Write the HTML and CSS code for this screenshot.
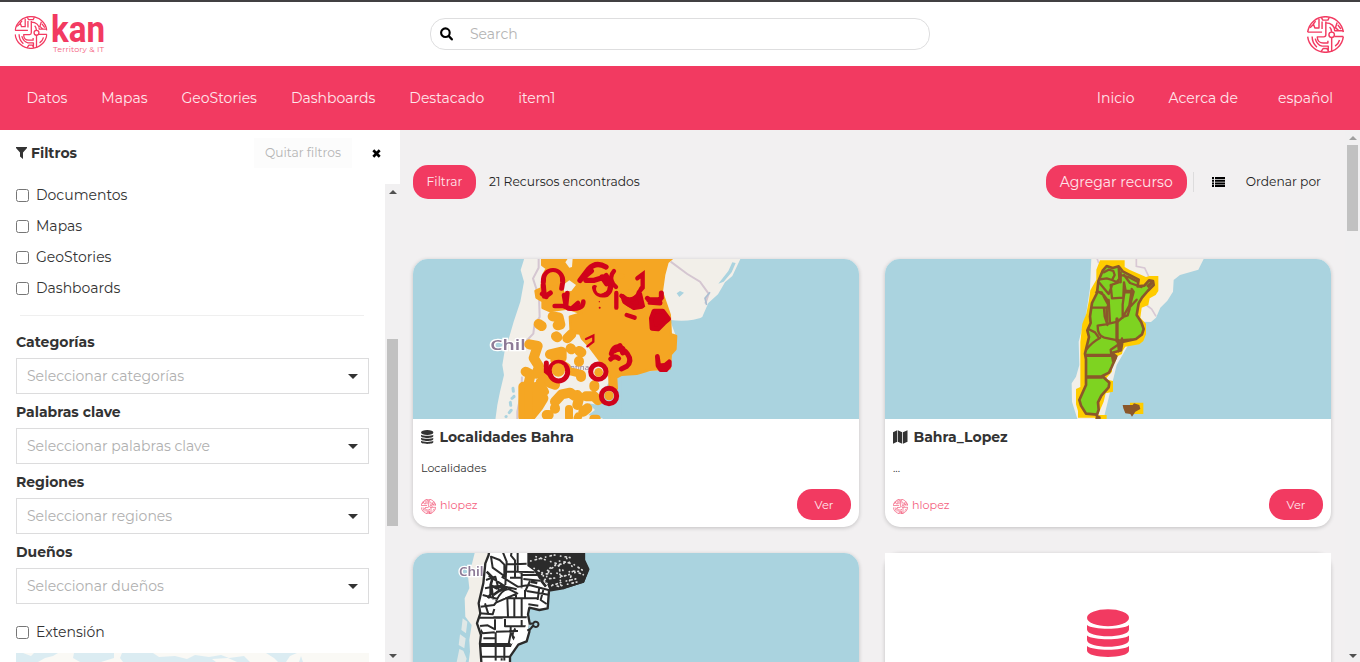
FILE: index.html
```html
<!DOCTYPE html>
<html lang="es">
<head>
<meta charset="utf-8">
<title>Kan Territory &amp; IT</title>
<link rel="stylesheet" href="styles.css">
</head>
<body>
<svg class="defs" width="0" height="0">
  <symbol id="globe" viewBox="0 0 108 108">
    <g fill="none" stroke="#f23a61" stroke-width="4.200" stroke-linejoin="round">
      <path d="M2 47C6 20 28 2 54 2s48 18 52 45"/>
      <path d="M2 60c3 26 25 46 52 46s49-20 52-46"/>
      <path d="M2 47h42M9 34l10-10 4 11h12V9M18 24l7-9M44 16v22"/>
      <path d="M42 4l4 8h15l4-8M55 16v39a6 6 0 0 1-6 6H30c0 12 8 18 17 18h14v-7"/>
      <path d="M55 20c16 0 26 10 26 23h25M66 32c4 3 5 8 6 15M88 19l-5 15 10 9M90 26l9 12"/>
      <circle cx="72" cy="55" r="8"/>
      <path d="M72 63v42M80 60h26M95 70c-2 8-6 13-13 18M15 60c0 14 6 24 14 31M24 66c3 11 10 20 20 22h18v17M41 104l6-9h11l6 9"/>
    </g>
  </symbol>
  <symbol id="database" viewBox="0 0 42 48">
    <ellipse cx="21" cy="8.700" rx="21" ry="8.500"/>
    <path d="M0 16c6 5 36 5 42 0v4.500c0 9-42 9-42 0zM0 26.500c6 5 36 5 42 0V31c0 9-42 9-42 0zM0 37c6 5 36 5 42 0v4.500c0 8.500-42 8.500-42 0z"/>
  </symbol>
  <clipPath id="provinces"><path d="M158 47l12-17 18 6 18-5 12 15 48 25-3 22 20-8 22-10 10 15-18 18-17 22-12 17-9 35 17 25 4 20-22 20-42 14-4 25-28 8 18 12-18 30-8 17-20 10 21 20-2 14-22 25-10 20 2 22-5 15-33-3-15-24-5-17 20-45 0-77-3-17 12-50-5-20 10-22 4-40-3-30 18-30 0-32z"/></clipPath>
  <clipPath id="departments"><path d="M240 20H525l-3 25 15 28-15 40-60 18-45 5-4 55-25 7-34-7-4 28-2 20-8 28-25 10-17 40v30H215l-5-70 3-25-12-35 10-30-5-30 14-60 6-60 10-25 4-30z"/></clipPath>
</svg>

<header class="brandbar">
  <svg class="logo" width="96" height="44" viewBox="0 0 96 44">
    <use href="#globe" x="0.500" y="4" width="33" height="33"/>
    <text class="logo-name" x="37" y="29.700" textLength="54" lengthAdjust="spacingAndGlyphs">kan</text>
    <text class="logo-tag" x="39" y="40" textLength="51" lengthAdjust="spacing">Territory &amp; IT</text>
  </svg>
  <div class="search">
    <svg width="14" height="14" viewBox="0 0 14 14"><circle cx="5.400" cy="5.700" r="4.300" fill="none" stroke="#000" stroke-width="2.100"/><path d="M8.700 9l3.100 3.300" stroke="#000" stroke-width="2.400" stroke-linecap="round"/></svg>
    <span>Search</span>
  </div>
  <svg class="avatar" width="37" height="37"><use href="#globe" width="37" height="37"/></svg>
</header>

<nav class="menu">
  <div class="menu-left"><a>Datos</a><a>Mapas</a><a>GeoStories</a><a>Dashboards</a><a>Destacado</a><a>item1</a></div>
  <div class="menu-right"><a>Inicio</a><a>Acerca de</a><a class="lang">español</a></div>
</nav>

<div class="body">
  <aside class="side">
    <div class="side-head">
      <svg width="11" height="12" viewBox="0 0 11 12"><path d="M0 0h11v1L7 5.500V12L4 9.500v-4L0 1z" fill="#333"/></svg>
      <b>Filtros</b>
      <span class="clear">Quitar filtros</span>
      <svg class="close" width="9" height="9" viewBox="0 0 9 9"><path d="M1.300 1.300l6.400 6.400M7.700 1.300L1.300 7.700" stroke="#000" stroke-width="2.700"/></svg>
    </div>
    <div class="side-body">
      <div class="filters">
        <label class="check"><i></i><span>Documentos</span></label>
        <label class="check"><i></i><span>Mapas</span></label>
        <label class="check"><i></i><span>GeoStories</span></label>
        <label class="check"><i></i><span>Dashboards</span></label>
        <hr>
        <b class="field-name">Categorías</b>
        <div class="select">Seleccionar categorías</div>
        <b class="field-name">Palabras clave</b>
        <div class="select">Seleccionar palabras clave</div>
        <b class="field-name">Regiones</b>
        <div class="select">Seleccionar regiones</div>
        <b class="field-name">Dueños</b>
        <div class="select">Seleccionar dueños</div>
        <label class="check extent"><i></i><span>Extensión</span></label>
        <svg class="minimap" width="353" height="9" viewBox="0 0 353 9"><path fill="#dbecf2" d="M0 0h353v9H0z"/><path fill="#faf9f5" d="M7 0h11l-3 3zM22 9l7-4 8-2 5-3h16l-1 5 7 4zM85 9l13-4V0h8l-2 5 3 4zM137 0h113l8 5 4 4h-28l-6-6-15 2-8-3-12 2-14-2-8 4-12-3-16 1zM196 6l16-1 9 4h-21zM270 9l4-6 7-3h15v9h-9l-2-6-2 6zM296 0h57v9h-57z"/></svg>
      </div>
      <div class="bar"><i class="up dark"></i><div class="thumb side-thumb"></div><i class="down"></i></div>
    </div>
  </aside>

  <main class="main">
    <div class="content">
      <div class="tools">
        <span class="btn filter">Filtrar</span>
        <span class="count">21 Recursos encontrados</span>
        <span class="btn add">Agregar recurso</span>
        <span class="divider"></span>
        <svg class="list" width="13" height="10" viewBox="0 0 13 10"><path d="M0 0h2v2H0zM3 0h10v2H3zM0 2.700h2v2H0zM3 2.700h10v2H3zM0 5.400h2v2H0zM3 5.400h10v2H3zM0 8h2v2H0zM3 8h10v2H3z"/></svg>
        <span class="order">Ordenar por</span>
      </div>
      <div class="cards">
        <article class="card">
          <svg class="pic" viewBox="0 0 446 160">
            <path fill="#aad3df" d="M0 0h446v160H0z"/>
            <g transform="translate(67 -4) scale(.33333)">
              <path fill="#f2efe9" d="M133 10L122 45 132 80 121 140 101 200 88 245 76 275 67 330 72 360 60 410 52 450 46 495H370L345 450 400 360 545 345 590 250 570 195Q610 200 640 194T668 183L685 144 714 118 735 82 757 63 782 10z"/>
              <path fill="#aad3df" d="M757 22l-12 26-30 38 16-6 24-28 12-28zM590 115l10-7 12 5-14 13zM415 365l0 25 5 50-30 15-65-10 20 20-20 15 40 10 60-10V365z"/>
              <path fill="none" stroke="#aad3df" stroke-width="9" stroke-linecap="round" stroke-dasharray="9 15" d="M99 400l3 25-12 10 4 30-16 20"/>
              <path fill="none" stroke="#cdbcca" stroke-width="6" opacity=".8" d="M176 10v28l-17 33 18 55 2 60-16 25-3 25-24 25M126 365l-2 45-12 60 0 25M572 20l50 37 38 23 26 36-10 30"/>
              <path fill="none" stroke="#aabfd2" stroke-width="5" d="M690 112l-15 18 5 20"/>
              <g class="place"><text x="31" y="286" textLength="106" lengthAdjust="spacingAndGlyphs">Chil</text></g>
              <text x="270" y="346" class="place-small">ntina</text>
              <path fill="#f5a623" stroke="#f5a623" stroke-width="8" stroke-linejoin="round" d="M187 10H576L562 22 552 60 545 110 569 180 572 238 588 243 586 282 572 298 569 340 510 344 470 356 425 359 408 368 410 401 390 401 388 355 355 310 329 275 306 250 300 235 275 232 272 222 270 185 305 175 262 160 230 165 210 168 188 158 188 138 170 128 167 108 184 100 189 62 201 40 187 30z"/>
              <path fill="#f2efe9" d="M256 22l8-12 14 0-2 26-8 2zM252 88l16-12 20 14-14 18-22 2z"/>
              <g fill="none" stroke="#f5a623" stroke-linecap="round" stroke-linejoin="round">
                <path stroke-width="30" d="M176 207l9 6M218 184l18 3 5 22-8 2M228 244l4 3M262 250l12-12M148 268l25 5-12 36 16 25-7 22M137 350l15 8-8 35M180 350l30 34 15 5M130 395v90M165 400l-10 80 20-25 15-25-20-35M225 440l20-22 25-5 14 10M292 420l4 5M225 459v2M292 450l4-16M200 480h6M322 460l-12 10M318 424h24l12 12M343 391v4M303 360v6M272 280l2 3M298 288l6 4M297 318v2M210 298l35-8v18"/>
                <path stroke-width="24" d="M145 405v80M180 380l15 30M267 462v25M295 484l-2 4M350 491h-10M223 315h10M250 330l10 6M275 350l24 6"/>
              </g>
              <g fill="none" stroke="#d0021b" stroke-width="15" stroke-linecap="round">
                <path d="M190 82c-3-48 62-46 58 0l-3 18M190 90l3 34M187 117l12 8M205 118l6-4"/>
                <path d="M224 153h26l22 8M262 114l-4 40M264 160q46 6 46-20M252 120l6 34M294 144l-18 16" stroke-width="14"/>
                <path d="M300 76l26-34q22-24 52-6M312 66l22-18M318 76h24l20-6 16-6M344 98q6 28 36 20 16-12 10-36l-12-20M366 66l14 20" stroke-width="16"/>
                <path d="M402 48q-16 18-2 40l8 8M409 114v44M424 122l28 20 20-20 12-22M472 70l16-12v40l-12 14M432 137q22 26 56 14l-8-34M440 180l24 8" stroke-width="13"/>
                <path d="M502 130q20 20 42-2v-14M510 142l30 2M506 134h34" stroke-width="15"/>
                <path d="M318 252l22-10v18l-18 14" stroke-width="7"/>
                <ellipse cx="236" cy="350" rx="27" ry="28"/><path d="M199 324v25l12 10"/><circle cx="355" cy="350" r="23"/><circle cx="387" cy="423" r="23"/>
                <path d="M394 296q8-30 34-16M402 288q24-14 40 8 16 22-2 38l-16 8M392 312q12-12 24-2"/><path d="M420 272l8 22"/>
              </g>
              <path fill="#d0021b" stroke="#d0021b" stroke-width="14" stroke-linejoin="round" d="M428 124q20 22 48-4l10 34-24 4-28-18zM522 168h26l18 24-14 12-18 18-18-2-2-30zM532 304l4 26q18 6 32-10v12l-10 12h-16l-8-12z"/>
              <g fill="#f5a623"><circle cx="219" cy="72" r="21"/><circle cx="425" cy="62" r="8"/><circle cx="450" cy="114" r="10"/><circle cx="387" cy="422" r="14"/><circle cx="356" cy="352" r="13"/><circle cx="235" cy="345" r="20"/><circle cx="362" cy="102" r="14"/></g>
              <g fill="#d0021b"><circle cx="358" cy="140" r="2"/><circle cx="359" cy="158" r="3"/></g>
            </g>
          </svg>
          <div class="info">
            <h2><svg width="12.500" height="14" viewBox="0 0 42 48" preserveAspectRatio="none"><use href="#database" width="42" height="48"/></svg><span>Localidades Bahra</span></h2>
            <p>Localidades</p>
            <div class="foot"><svg width="15" height="15"><use href="#globe" width="15" height="15"/></svg><span class="owner">hlopez</span><span class="btn see">Ver</span></div>
          </div>
        </article>

        <article class="card">
          <svg class="pic" viewBox="0 0 446 160">
            <path fill="#aad3df" d="M0 0h446v160H0z"/>
            <g transform="translate(165 -4) scale(.33333)">
              <path fill="#f2efe9" d="M124 10L120 100 108 180 86 260 88 330 78 365 65 385 66 440 83 495H160L200 330 275 200 303 201 318 188 331 158 352 137 369 110 371 75 390 60 445 44 462 10z"/>
              <path fill="none" stroke="#d8c8d4" stroke-width="5" d="M259 10v24l25 5 12 25M285 147l20 15 13 22M141 10l5 14"/>
              <path fill="#ffcc00" d="M150 16h74v20l14 8 50 22 10-3h27v45l-8 12-18 10-4 20-20 8-4 30 17 18v32l-8 20-12 10-42 7-8 12-2 10-20 10v15l-10 10v18l-20 23 23 5v32l-22 5-6 25-12 28-8 20H84v-20l-6-20V402l13-6 0-135 6-55 12-30 8-40 4-30 18-32v-30z"/>
              <path fill="#ffcc00" d="M135 480h35v14h-35zM240 443h40v34h-40z"/>
              <path fill="#7ed321" stroke="#8b572a" stroke-width="8" stroke-linejoin="round" d="M158 47l12-14 18 6 18-5 12 15 48 25-3 20 20-2 14-16 12 2 2 12-18 18-17 20-10 17-6 35 14 22 7 20-5 16-18 14-41 9-4 25-28 8 14 10-14 32-8 17-20 10 21 20-2 14-22 25-10 20 2 22-5 15-33-3-15-24-5-17 20-45 0-77-3-17 12-50-5-20 10-22-2-20 6-40 15-30 4-35z"/>
              <g clip-path="url(#provinces)" fill="none" stroke="#8b572a" stroke-linejoin="round" stroke-linecap="round">
                <path stroke-width="7" d="M150 73l20-3 16 5 8-15-4-12-14-4-14 8M186 75l14 6 8-10-2-32M148 83l28 34 8-20 2-8 24-8M212 52v30M214 60l26 8 26 14M222 60l18 24 34 12M222 82l5 26 22 0M135 110l20 2 10 20 10 18-4 8M145 110l16 10 15 20M182 90l4 40 34-2 2-46M224 108l-6 40 0 40M222 112l22 0-6 40-20 36M245 102l6 8-12 46M240 156l20-22M120 158l50 0 2 52M176 135l4 70M162 160l2 24 8 24M143 212l24-4 36-8 16-14 14-5 6-20M143 212q-1 30 20 36l40 8 70-4M115 222l20 10 10 14M106 287q20-26 44-38M205 255l8 28M184 300l-2-16 30-20 4-14"/>
                <path stroke-width="10" d="M201 192v66M101 301h99M105 366h51"/>
              </g>
              <path fill="#8b572a" d="M218 450l14 0 16 0 4-5 16 5 3 12-15 8-10 15-5-8-15-2-6-15zM137 477l15 8v10h-15zM182 300l20 2-4 14-12 6zM200 262l16-3v28l-12 6z"/>
              <path fill="none" stroke="#8b572a" stroke-width="10" d="M292 96l14-14"/>
            </g>
          </svg>
          <div class="info">
            <h2><svg width="14.500" height="14" viewBox="0 0 15 14"><path fill="#333" d="M0 2l4.300-2v12L0 14zM5 0l4.500 2v12L5 12zM10.300 2L15 0v12l-4.700 2z"/></svg><span>Bahra_Lopez</span></h2>
            <p>...</p>
            <div class="foot"><svg width="15" height="15"><use href="#globe" width="15" height="15"/></svg><span class="owner">hlopez</span><span class="btn see">Ver</span></div>
          </div>
        </article>

        <article class="card">
          <svg class="pic" viewBox="0 0 446 160">
            <path fill="#aad3df" d="M0 0h446v160H0z"/>
            <g transform="translate(-3 -8) scale(.33333)">
              <path fill="#f2efe9" d="M195 20L185 60 172 75 178 130 164 160 166 215 185 240 178 285 180 320 170 400H230L240 20z"/>
              <path fill="#f2efe9" opacity=".75" d="M158 220l14 10-4 35-14-10zM150 268l17 12-4 30-17-10zM148 312l12 5 10 24-12 40-22-10z"/>
              <g class="place"><text x="147" y="93" class="place-mid" textLength="74" lengthAdjust="spacingAndGlyphs">Chil</text></g>
              <path fill="#fff" stroke="#2b2b2b" stroke-width="7" stroke-linejoin="round" d="M240 20H522l0 25 13 28-15 36-58 20-45 8-4 53-25 5-30-7-4 20 6 33-2 20-8 28-25 10-25 36v30H215l-5-70 3-25-12-35 10-30-5-30 14-60 6-60 10-25 4-30z"/>
              <path fill="#aad3df" stroke="#2b2b2b" stroke-width="6" d="M358 237l12-2a8 8 0 1 1 0 6l-8 10-10 6"/>
              <g clip-path="url(#departments)">
                <path fill="#2b2b2b" d="M352 20H540l0 115-70 0-50 4-10-24-22-12-16-26-20-14z"/>
                <path fill="none" stroke="#2b2b2b" stroke-width="6" stroke-linejoin="round" d="M243 35l26 10 14 14v34l-35-25zM278 20l12 30-4 70M305 20l-2 12 12 14v50M323 20v60l12 4v46M290 58h22l38-2M288 80h36l50 2M335 90h48M300 98h32M340 102l50 5M275 95l48 30 35-5 60 16M360 108l-14 30M236 92l50 33 34 8M270 118l20 15M225 130l40-8 18 14M228 105l28-10 12 45M258 168q20-40 40-35l24 12-64 28M245 125l5 38M218 150l45 12M212 185l40-5 10-12M292 160l2 56M313 162v54M335 160v55M285 160h100M345 135v22M388 125l-5 40M355 178l30 4M350 138l70 12M400 135l-8 30 18 12M318 140v18M250 217h105M208 218h70M208 205l40 3 5-16M225 175l10 32M285 222v22h70v-22M255 223v30l-22-12-24 2M203 240l15 25 36-3M335 225v18M302 245v20l-6 32M258 260l66-2M257 262v140M220 280l34 0M212 297h90M212 303h98M316 250q-20 30 8 40l20 0M300 260l20 30-20 13M283 303v60M212 335h85M275 340v40"/>
                <path fill="none" stroke="#2b2b2b" stroke-width="8" d="M230 80l18 18-6 22 0 28-8 12M244 122l16 8 14-8 16 10M250 150l14-10 16-8M362 110l20 4M392 105l16 20"/>
                <path fill="none" stroke="#ddd" stroke-width="5" stroke-linecap="round" stroke-dasharray="1 13 4 9 2 17" d="M362 48l30-8 40-10 50 8M372 70l26 14 30-16 20-20 40 8 30 20M395 88l45-4 20 12 20-18 38 2M405 103l50-7 45-15 20 8M425 122l35-12 45-10M378 35l60 20 30 30M410 95l12-30 40-10M400 92l5 22 40 10 60-14M470 40l20 30-14 46M448 60l4 60"/>
              </g>
            </g>
          </svg>
        </article>

        <article class="card plain">
          <div class="placeholder"><svg width="42" height="48" viewBox="0 0 42 48"><use href="#database" width="42" height="48"/></svg></div>
        </article>
      </div>
    </div>
    <div class="bar main-bar"><i class="up"></i><div class="thumb main-thumb"></div><i class="down"></i></div>
  </main>
</div>
</body>
</html>
```
FILE: styles.css
```css
* { box-sizing: border-box; }
html, body { height: 100%; }
body { margin: 0; overflow: hidden; display: flex; flex-direction: column; background: #f2f0f1; color: #333; font: 400 14px/20px Montserrat, Inter, "Liberation Sans", sans-serif; }
.defs { position: absolute; }
svg { display: block; flex: none; }

.brandbar { flex: none; height: 66px; border-top: 2px solid #414042; background: #fff; display: grid; grid-template-columns: 1fr 500px 1fr; align-items: center; padding: 0 16px 0 15px; }
.logo { margin: -1px 0 0 -1px; overflow: visible; }
.logo-name { font: 700 36px Roboto, sans-serif; fill: #f23a61; }
.logo-tag { font: 400 8px Montserrat, Lato, sans-serif; fill: #f4607e; }
.search { height: 32px; border: 1px solid #dededf; border-radius: 15px; display: flex; align-items: center; gap: 16px; padding-left: 9px; margin: 0 -.5px 0 .5px; color: #b4b4b4; }
.avatar { justify-self: end; margin-top: 1px; }

.menu { flex: none; height: 64px; background: #f23a61; color: #ffe6eb; display: flex; justify-content: space-between; align-items: center; padding: 0 27px 0 26.5px; }
.menu-left, .menu-right { display: flex; gap: 34px; }
.lang { margin-left: 6px; }

.body { flex: 1; min-height: 0; display: flex; }
.side { width: 400px; flex: none; background: #fff; display: flex; flex-direction: column; overflow: hidden; }
.side-head { height: 54px; flex: none; display: flex; align-items: center; padding: 0 19px 8px 16px; }
.side-head b { margin-left: 4px; }
.clear { margin-left: auto; width: 98px; height: 30px; line-height: 30px; text-align: center; background: #fcfcfc; color: #b5b5b5; font-size: 12.25px; }
.close { margin-left: 20px; }
.side-body { flex: 1; min-height: 0; display: flex; }
.filters { flex: 1; padding: 0 16px; overflow: hidden; }
.check { display: flex; align-items: center; gap: 7px; height: 31px; }
.check:first-child { height: 27px; padding-bottom: 5px; }
.check i { width: 13px; height: 13px; border: 1px solid #767676; border-radius: 2.5px; }
.check span { margin-top: -1px; }
.filters hr { border: 0; border-top: 1px solid #efefef; margin: 11px 5px 16px 4px; }
.field-name { display: block; height: 26px; line-height: 20px; }
.select { height: 36px; border: 1px solid #dcdcdd; color: #b0b0b0; display: flex; align-items: center; justify-content: space-between; padding: 0 10px; margin-bottom: 8px; }
.select::after { content: ""; border: 5px solid transparent; border-top-color: #333; border-bottom: 0; }
.extent { margin-top: 13px; }
.minimap { margin-top: 5px; }

.bar { width: 15px; flex: none; background: #f1f0f1; display: flex; flex-direction: column; align-items: center; }
.bar i { border: 4px solid transparent; }
.bar .up { border-top: 0; border-bottom-color: #9f9f9f; margin: 6px 0; }
.bar .dark { border-bottom-color: #505050; }
.bar .down { border-bottom: 0; border-top-color: #505050; margin: auto 0 4px; }
.thumb { width: 11px; background: #c1c1c1; }
.side-thumb { height: 187px; margin-top: 139px; }
.main-thumb { height: 86px; margin-top: -1px; }

.main { flex: 1; min-width: 0; display: flex; }
.content { flex: 1; min-width: 0; padding: 35px 14px 0 13px; overflow: hidden; }
.tools { height: 34px; display: flex; align-items: center; font-size: 12.25px; color: #222; padding-right: 10px; }
.btn { background: #f23a61; color: #ffe6eb; display: flex; align-items: center; justify-content: center; height: 34px; border-radius: 15px; }
.filter { width: 63px; margin-right: 13px; }
.add { width: 141px; margin-left: auto; font-size: 14px; }
.divider { width: 1px; height: 20px; background: #dddcdd; margin: 0 18px 0 6px; }
.list { margin-right: 21px; }
.cards { display: grid; grid-template-columns: 446px 446px; gap: 26px; margin-top: 60px; }
.card { height: 268px; background: #fff; border-radius: 15px; overflow: hidden; box-shadow: 0 1px 4px rgba(0,0,0,.2); }
.plain { overflow: visible; }
.placeholder { height: 160px; background: #fff; fill: #f23a61; display: flex; align-items: center; justify-content: center; }
.pic { width: 446px; height: 160px; filter: blur(.35px); }
.place text { font: 600 42px "Noto Sans", sans-serif; fill: #8d7a96; stroke: #fff; stroke-width: 7px; paint-order: stroke; }
.place .place-mid { font-size: 35px; }
.place-small { font: 24px "Noto Sans", sans-serif; fill: #8d7a96; }
.info { padding: 8px; }
.info h2 { margin: 0; display: flex; align-items: center; height: 20px; gap: 6px; font-size: 14px; fill: #333; }
.info p { margin: 12px 0 10px; font-size: 11px; line-height: 18px; }
.foot { display: flex; align-items: center; height: 31px; font-size: 11.2px; margin-top: 12px; }
.owner { color: #f4607e; margin-left: 4px; }
.see { width: 54px; height: 31px; margin-left: auto; font-size: 11.5px; }
.foot svg { margin-top: 3px; }
```
